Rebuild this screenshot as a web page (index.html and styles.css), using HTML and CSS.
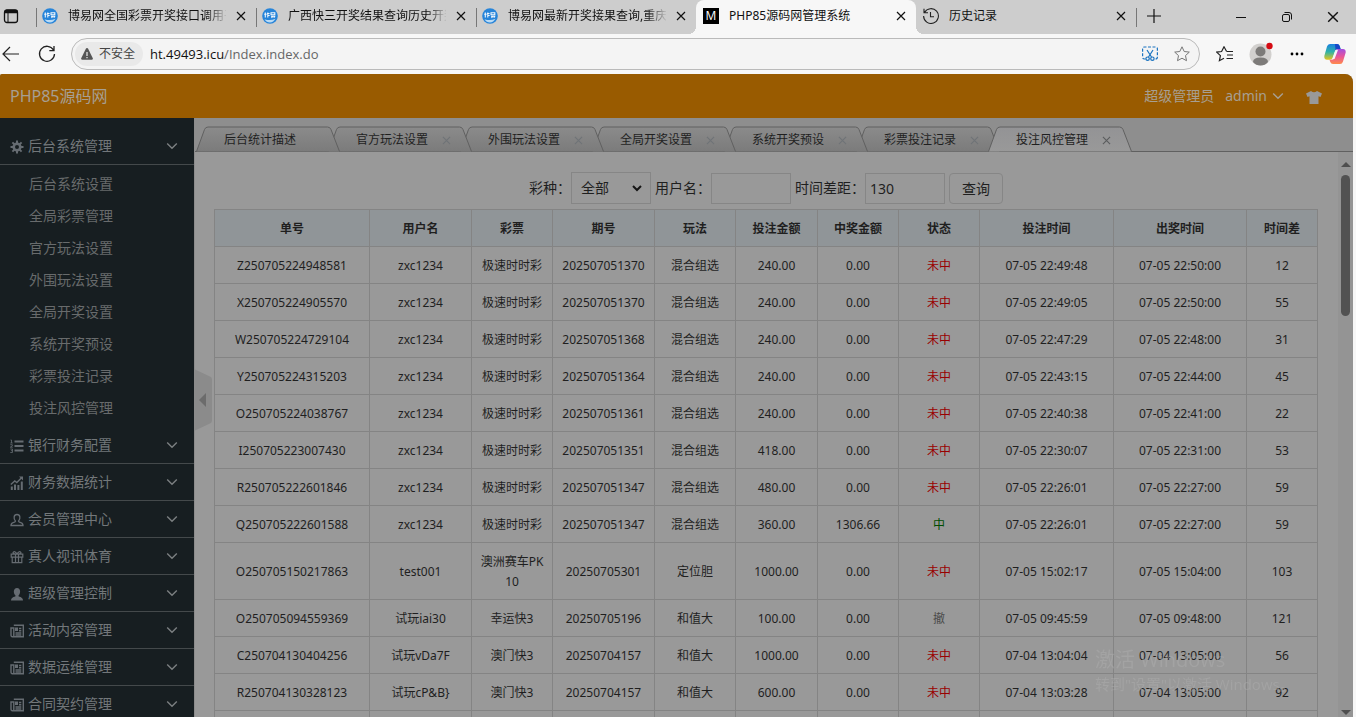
FILE: index.html
```html
<!DOCTYPE html>
<html lang="zh-CN">
<head>
<meta charset="utf-8">
<title>PHP85源码网管理系统</title>
<link rel="stylesheet" href="styles.css">
</head>
<body>
<svg class="defs" aria-hidden="true">
  <defs>
    <linearGradient id="g-tab" x1="0" y1="0" x2="0" y2="1"><stop offset="0" stop-color="#8b8b8b"/><stop offset="1" stop-color="#7b7b7b"/></linearGradient>
    <linearGradient id="g-active" x1="0" y1="0" x2="0" y2="1"><stop offset="0" stop-color="#939395"/><stop offset="1" stop-color="#999"/></linearGradient>
    <linearGradient id="g-cop1" x1="0" y1="0" x2="0" y2="1"><stop offset="0" stop-color="#1a7fe0"/><stop offset=".5" stop-color="#2fb3a8"/><stop offset="1" stop-color="#e8c61c"/></linearGradient>
    <linearGradient id="g-cop2" x1="0" y1="0" x2="0" y2="1"><stop offset="0" stop-color="#a14fe0"/><stop offset=".5" stop-color="#e8559a"/><stop offset="1" stop-color="#ff8a4a"/></linearGradient>
  </defs>
  <symbol id="i-x" viewBox="0 0 10 10"><path d="M1 1l8 8M9 1L1 9" fill="none" stroke="currentColor" stroke-width="1.2"/></symbol>
  <symbol id="i-down" viewBox="0 0 12 8"><path d="M1.2 1.5L6 6.3l4.800-4.800" fill="none" stroke="currentColor" stroke-width="1.400"/></symbol>
  <symbol id="i-site" viewBox="0 0 16 16"><circle cx="8" cy="8" r="7.800" fill="#2684d9"/><path d="M2.500 11.200q5.500 2 11-.4-2 3.700-5.500 3.700t-5.500-3.300z" fill="#b9dbf6"/><path d="M3.300 4.500v5M2.200 6.200h2.400M5.800 4.500v5M5 5.500h2.500M5.300 7.500h2.400M9 4.800h3.800v1.900H9zM9 8.200h4.300M9.500 9.800l1.200-1.500M11.800 9.800l1-1.700" fill="none" stroke="#f0f7fe" stroke-width="1.100"/></symbol>
  <symbol id="i-gear" viewBox="0 0 14 14"><circle cx="7" cy="7" r="3.300" fill="none" stroke="currentColor" stroke-width="2.600"/><path d="M7 .5v3M7 10.500v3M.5 7h3M10.500 7h3M2.400 2.400l2 2M9.600 9.600l2 2M11.600 2.400l-2 2M4.400 9.600l-2 2" stroke="currentColor" stroke-width="2"/></symbol>
  <symbol id="i-list" viewBox="0 0 14 14"><path d="M4.500 2.500h9M4.500 7h9M4.500 11.500h9" stroke="currentColor" stroke-width="1.800"/><path d="M.5 1h1v3M.3 4h2.400M.3 5.700h2v1.200l-2 1.300h2.500M.3 10h2.200v3.500H.3M1 11.700h1.500" fill="none" stroke="currentColor" stroke-width=".8"/></symbol>
  <symbol id="i-chart" viewBox="0 0 14 14"><path d="M.8 8.500l4-3.500 2 1.500 5-5" fill="none" stroke="currentColor" stroke-width="1.400"/><path d="M9 .5h4v4z" fill="currentColor"/><path d="M1.800 10.500V14M5 8.500V14M8.400 9V14M11.800 5.500V14" stroke="currentColor" stroke-width="2"/></symbol>
  <symbol id="i-member" viewBox="0 0 14 14"><path d="M5.500 8.200C3.200 5.500 3.700 1.500 7 1.500s3.800 4 1.500 6.700q.2 1 2.300 1.500 2.200.5 2.200 2.800H1q0-2.300 2.200-2.800 2.100-.5 2.300-1.500z" fill="none" stroke="currentColor" stroke-width="1.300"/></symbol>
  <symbol id="i-gift" viewBox="0 0 14 14"><path d="M1.200 4.200h11.600v3H1.200zM2.200 7.200v5.500h9.600V7.200M5.500 4.200v8.500M8.500 4.200v8.500M7 4Q5 .8 3.500 2T5 4M7 4q2-3.200 3.500-2T9 4" fill="none" stroke="currentColor" stroke-width="1.200"/></symbol>
  <symbol id="i-admin" viewBox="0 0 14 14"><path d="M5.500 8.500C2.800 6 3.500 1 7 1s4.200 5 1.500 7.500l.2 1Q13 10.300 13 13.500H1q0-3.200 4.300-4z" fill="currentColor"/></symbol>
  <symbol id="i-news" viewBox="0 0 14 14"><path d="M3.800 1.200h9.500v11.500H2.300Q1 12.700 1 11.300V4h2.800v8M5.500 9h5.800M5.500 11h5.800M9 4.500h2.300M9 6.700h2.300" fill="none" stroke="currentColor" stroke-width="1.400"/><path d="M5 3.500h3V7H5z" fill="currentColor"/></symbol>
  <symbol id="i-shape" viewBox="0 0 144 26"><path d="M.5 25.500L8.500 3.500Q9.500 1 12 1H131.500Q134 1 135 3.500L143.500 25.500" stroke="#606060"/></symbol>
</svg>

<header class="browser">
  <div class="tabbar">
    <button class="tab-menu" aria-label="标签页操作"><svg width="16" height="16" viewBox="0 0 16 16"><rect x="1.500" y="2" width="13" height="12.500" rx="2.500" fill="none" stroke="#111" stroke-width="1.300"/><path d="M1.500 2.800q0-1 2-1h9q2 0 2 1v2.500h-13z" fill="#111"/><path d="M5 5v9" stroke="#111"/></svg></button>
    <div class="btab"><svg class="fav"><use href="#i-site"/></svg><span class="btitle fade">博易网全国彩票开奖接口调用平</span><button class="bclose" aria-label="关闭"><svg><use href="#i-x"/></svg></button></div>
    <div class="btab"><svg class="fav"><use href="#i-site"/></svg><span class="btitle fade">广西快三开奖结果查询历史开奖</span><button class="bclose" aria-label="关闭"><svg><use href="#i-x"/></svg></button></div>
    <div class="btab"><svg class="fav"><use href="#i-site"/></svg><span class="btitle fade">博易网最新开奖接果查询,重庆</span><button class="bclose" aria-label="关闭"><svg><use href="#i-x"/></svg></button></div>
    <div class="btab current"><span class="fav fav-m">M</span><span class="btitle">PHP85源码网管理系统</span><button class="bclose" aria-label="关闭"><svg><use href="#i-x"/></svg></button></div>
    <div class="btab plain"><svg class="fav" viewBox="0 0 16 16" fill="none" stroke="#222" stroke-width="1.100"><path d="M1.500 4.500A7.400 7.400 0 1 1 .6 8M1 .8v4h4M7.500 4v4.800H11"/></svg><span class="btitle">历史记录</span><button class="bclose" aria-label="关闭"><svg><use href="#i-x"/></svg></button></div>
    <button class="newtab" aria-label="新建标签页"><svg width="14" height="14" viewBox="0 0 14 14"><path d="M7 0v14M0 7h14" stroke="#111" stroke-width="1.200"/></svg></button>
    <div class="wincontrols">
      <button aria-label="最小化"><svg width="10" height="10" viewBox="0 0 10 10"><path d="M0 5.500h10" stroke="#111"/></svg></button>
      <button aria-label="还原"><svg width="10" height="10" viewBox="0 0 10 10" fill="none" stroke="#111"><rect x=".5" y="2.500" width="7" height="7" rx="1.500"/><path d="M2.500.5H7q2.500 0 2.500 2.500v4.500"/></svg></button>
      <button aria-label="关闭窗口"><svg width="12" height="12"><use href="#i-x"/></svg></button>
    </div>
  </div>
  <div class="toolbar">
    <button aria-label="后退"><svg width="17" height="16" viewBox="0 0 17 16"><path d="M17 8H2M8 1L1 8l7 7" fill="none" stroke="#222" stroke-width="1.200"/></svg></button>
    <button class="reload" aria-label="刷新"><svg width="18" height="18" viewBox="0 0 18 18"><path d="M15.500 5A7.500 7.500 0 1 0 16.500 9M16 1v4.700h-4.700" fill="none" stroke="#222" stroke-width="1.300"/></svg></button>
    <div class="address">
      <button class="insecure"><svg width="12" height="12" viewBox="0 0 12 12"><path d="M6 0q.7 0 1 .6l4.800 9.700q.4 1.200-.8 1.400H1Q-.2 11.500.2 10.300L5 .6Q5.300 0 6 0z" fill="#555"/><path d="M6 4v4M6 9v1.300" stroke="#ebebeb" stroke-width="1.200"/></svg>不安全</button>
      <a class="url" href="#">ht.49493.icu<span>/Index.index.do</span></a>
      <button aria-label="截图"><svg width="16" height="16" viewBox="0 0 16 16" fill="none" stroke="#1a73c0" stroke-width="1.200"><path d="M3.500 13H2.500Q.6 13 .6 11V3Q.6 1 2.500 1h11q1.900 0 1.900 2v8q0 2-1.900 2h-1" stroke-dasharray="3 1.500"/><path d="M5 4l4.500 7M11 4l-4.500 7"/><circle cx="5.600" cy="12.700" r="1.700"/><circle cx="10.400" cy="12.700" r="1.700"/></svg></button>
      <button class="fav-star" aria-label="收藏"><svg width="16" height="16" viewBox="0 0 16 16"><path d="M8 .8l2.200 4.700 5.100.6-3.800 3.500 1 5.100L8 12.200l-4.500 2.500 1-5.100L.7 6.100l5.100-.6z" fill="none" stroke="#777"/></svg></button>
    </div>
    <button class="collections" aria-label="收藏夹"><svg width="18" height="16" viewBox="0 0 18 16" fill="none" stroke="#222" stroke-width="1.200"><path d="M10.500 5.200L8 .8 5.600 5.500l-4.900.6 3.700 3.500-1 5.100L8 12.300M10.500 5.500H17M11 9h6M10.500 12.500H17"/></svg></button>
    <button class="profile" aria-label="个人资料"><svg width="24" height="24" viewBox="0 0 24 24"><circle cx="11.500" cy="12.500" r="11" fill="#d2d0ce"/><circle cx="11.500" cy="9.500" r="5" fill="#7d7b79"/><path d="M4 20q0-4.500 7.500-4.500T19 20q-3 3.500-7.500 3.500T4 20z" fill="#7d7b79"/><circle cx="20.500" cy="4" r="3.200" fill="#d50b13"/></svg></button>
    <button class="more" aria-label="更多"><svg width="14" height="4" viewBox="0 0 14 4"><circle cx="2" cy="2" r="1.400"/><circle cx="7" cy="2" r="1.400"/><circle cx="12" cy="2" r="1.400"/></svg></button>
    <button class="copilot" aria-label="Copilot"><svg width="22" height="20" viewBox="0 0 22 20"><path d="M6 0h7q2 0 2.700 2l.9 3h-3q-2 0-2.600 2L8.500 14q-.6 1.800-2.500 1.800H3Q0 15.800.3 12L3 2.500Q3.700 0 6 0z" fill="url(#g-cop1)"/><path d="M13.500 5H19q3 0 2.700 3.500L19 17.500q-.7 2.500-3 2.500H9q-2 0-2.700-2L5.500 15.800h2q1.700 0 2.300-2l1.900-7Q12.200 5 13.500 5z" fill="url(#g-cop2)"/><path d="M11 0h2q2 0 2.700 2l.9 3h-3q-1.500 0-2.100 1.200z" fill="#1747c8"/><path d="M11.500 6.200L14 5.800l-3.300 9-2.500 1z" fill="#f7f7f7"/></svg></button>
  </div>
</header>

<div class="app">
  <header class="topbar">
    <a class="brand" href="#">PHP85源码网</a>
    <div class="account">
      <span>超级管理员</span>
      <button class="user">admin<svg width="12" height="8"><use href="#i-down"/></svg></button>
      <button class="skin" aria-label="换肤"><svg width="16" height="13" viewBox="0 0 16 13"><path d="M5 0q3 2.500 6 0l5 2.500L14.500 6l-2-.7V13h-9V5.300l-2 .7L0 2.500z" fill="currentColor"/></svg></button>
    </div>
  </header>
  <div class="workspace">
    <nav class="sidebar">
      <button class="group"><svg><use href="#i-gear"/></svg><span>后台系统管理</span><svg class="chev"><use href="#i-down"/></svg></button>
      <ul class="submenu">
        <li><a href="#">后台系统设置</a></li>
        <li><a href="#">全局彩票管理</a></li>
        <li><a href="#">官方玩法设置</a></li>
        <li><a href="#">外围玩法设置</a></li>
        <li><a href="#">全局开奖设置</a></li>
        <li><a href="#">系统开奖预设</a></li>
        <li><a href="#">彩票投注记录</a></li>
        <li><a href="#">投注风控管理</a></li>
      </ul>
      <button class="group"><svg><use href="#i-list"/></svg><span>银行财务配置</span><svg class="chev"><use href="#i-down"/></svg></button>
      <button class="group"><svg><use href="#i-chart"/></svg><span>财务数据统计</span><svg class="chev"><use href="#i-down"/></svg></button>
      <button class="group"><svg><use href="#i-member"/></svg><span>会员管理中心</span><svg class="chev"><use href="#i-down"/></svg></button>
      <button class="group"><svg><use href="#i-gift"/></svg><span>真人视讯体育</span><svg class="chev"><use href="#i-down"/></svg></button>
      <button class="group"><svg><use href="#i-admin"/></svg><span>超级管理控制</span><svg class="chev"><use href="#i-down"/></svg></button>
      <button class="group"><svg><use href="#i-news"/></svg><span>活动内容管理</span><svg class="chev"><use href="#i-down"/></svg></button>
      <button class="group"><svg><use href="#i-news"/></svg><span>数据运维管理</span><svg class="chev"><use href="#i-down"/></svg></button>
      <button class="group"><svg><use href="#i-news"/></svg><span>合同契约管理</span><svg class="chev"><use href="#i-down"/></svg></button>
    </nav>
    <button class="handle" aria-label="收起菜单"><svg width="18" height="62" viewBox="0 0 18 62"><path d="M0 0l17 8q1 1 1 3v40q0 2-1 3L0 62z" fill="#8b8b8b"/><path d="M12 24v14l-7-7z" fill="#6c6c6c"/></svg></button>
    <main class="content">
      <div class="pagetabs">
        <div class="ptab"><svg class="shape"><use href="#i-shape"/></svg><a href="#">后台统计描述</a></div>
        <div class="ptab"><svg class="shape"><use href="#i-shape"/></svg><a href="#">官方玩法设置</a><button aria-label="关闭"><svg><use href="#i-x"/></svg></button></div>
        <div class="ptab"><svg class="shape"><use href="#i-shape"/></svg><a href="#">外围玩法设置</a><button aria-label="关闭"><svg><use href="#i-x"/></svg></button></div>
        <div class="ptab"><svg class="shape"><use href="#i-shape"/></svg><a href="#">全局开奖设置</a><button aria-label="关闭"><svg><use href="#i-x"/></svg></button></div>
        <div class="ptab"><svg class="shape"><use href="#i-shape"/></svg><a href="#">系统开奖预设</a><button aria-label="关闭"><svg><use href="#i-x"/></svg></button></div>
        <div class="ptab"><svg class="shape"><use href="#i-shape"/></svg><a href="#">彩票投注记录</a><button aria-label="关闭"><svg><use href="#i-x"/></svg></button></div>
        <div class="ptab active"><svg class="shape"><use href="#i-shape"/></svg><a href="#">投注风控管理</a><button aria-label="关闭"><svg><use href="#i-x"/></svg></button></div>
      </div>
      <div class="frame">
        <div class="page">
          <form class="filters">
            <label for="kind">彩种：</label>
            <span class="pick"><select id="kind"><option>全部</option></select><svg width="10" height="7" viewBox="0 0 10 7"><path d="M1 1l4 4 4-4" fill="none" stroke="#151515" stroke-width="2"/></svg></span>
            <label for="name">用户名：</label>
            <input id="name" type="text">
            <label for="gap">时间差距：</label>
            <input id="gap" type="text" value="130">
            <button type="button">查询</button>
          </form>
          <table>
            <colgroup><col class="c-id"><col class="c-mid"><col class="c-s"><col class="c-mid"><col class="c-s"><col class="c-bet"><col class="c-s"><col class="c-s"><col class="c-time"><col class="c-out"><col class="c-diff"></colgroup>
            <thead><tr><th>单号</th><th>用户名</th><th>彩票</th><th>期号</th><th>玩法</th><th>投注金额</th><th>中奖金额</th><th>状态</th><th>投注时间</th><th>出奖时间</th><th>时间差</th></tr></thead>
            <tbody>
              <tr><td>Z250705224948581</td><td>zxc1234</td><td>极速时时彩</td><td>202507051370</td><td>混合组选</td><td>240.00</td><td>0.00</td><td class="lose">未中</td><td>07-05 22:49:48</td><td>07-05 22:50:00</td><td>12</td></tr>
              <tr><td>X250705224905570</td><td>zxc1234</td><td>极速时时彩</td><td>202507051370</td><td>混合组选</td><td>240.00</td><td>0.00</td><td class="lose">未中</td><td>07-05 22:49:05</td><td>07-05 22:50:00</td><td>55</td></tr>
              <tr><td>W250705224729104</td><td>zxc1234</td><td>极速时时彩</td><td>202507051368</td><td>混合组选</td><td>240.00</td><td>0.00</td><td class="lose">未中</td><td>07-05 22:47:29</td><td>07-05 22:48:00</td><td>31</td></tr>
              <tr><td>Y250705224315203</td><td>zxc1234</td><td>极速时时彩</td><td>202507051364</td><td>混合组选</td><td>240.00</td><td>0.00</td><td class="lose">未中</td><td>07-05 22:43:15</td><td>07-05 22:44:00</td><td>45</td></tr>
              <tr><td>O250705224038767</td><td>zxc1234</td><td>极速时时彩</td><td>202507051361</td><td>混合组选</td><td>240.00</td><td>0.00</td><td class="lose">未中</td><td>07-05 22:40:38</td><td>07-05 22:41:00</td><td>22</td></tr>
              <tr><td>I250705223007430</td><td>zxc1234</td><td>极速时时彩</td><td>202507051351</td><td>混合组选</td><td>418.00</td><td>0.00</td><td class="lose">未中</td><td>07-05 22:30:07</td><td>07-05 22:31:00</td><td>53</td></tr>
              <tr><td>R250705222601846</td><td>zxc1234</td><td>极速时时彩</td><td>202507051347</td><td>混合组选</td><td>480.00</td><td>0.00</td><td class="lose">未中</td><td>07-05 22:26:01</td><td>07-05 22:27:00</td><td>59</td></tr>
              <tr><td>Q250705222601588</td><td>zxc1234</td><td>极速时时彩</td><td>202507051347</td><td>混合组选</td><td>360.00</td><td>1306.66</td><td class="win">中</td><td>07-05 22:26:01</td><td>07-05 22:27:00</td><td>59</td></tr>
              <tr><td>O250705150217863</td><td>test001</td><td>澳洲赛车PK10</td><td>20250705301</td><td>定位胆</td><td>1000.00</td><td>0.00</td><td class="lose">未中</td><td>07-05 15:02:17</td><td>07-05 15:04:00</td><td>103</td></tr>
              <tr><td>O250705094559369</td><td>试玩iai30</td><td>幸运快3</td><td>20250705196</td><td>和值大</td><td>100.00</td><td>0.00</td><td class="void">撤</td><td>07-05 09:45:59</td><td>07-05 09:48:00</td><td>121</td></tr>
              <tr><td>C250704130404256</td><td>试玩vDa7F</td><td>澳门快3</td><td>20250704157</td><td>和值大</td><td>1000.00</td><td>0.00</td><td class="lose">未中</td><td>07-04 13:04:04</td><td>07-04 13:05:00</td><td>56</td></tr>
              <tr><td>R250704130328123</td><td>试玩cP&amp;B}</td><td>澳门快3</td><td>20250704157</td><td>和值大</td><td>600.00</td><td>0.00</td><td class="lose">未中</td><td>07-04 13:03:28</td><td>07-04 13:05:00</td><td>92</td></tr>
              <tr class="cut"><td></td><td></td><td></td><td></td><td></td><td></td><td></td><td></td><td></td><td></td><td></td></tr>
            </tbody>
          </table>
        </div>
        <div class="scrollbar"><span class="up"></span><span class="thumb"></span><span class="dn"></span></div>
      </div>
    </main>
  </div>
</div>
<div class="activate"><p class="big">激活 Windows</p><p>转到"设置"以激活 Windows。</p></div>
</body>
</html>
```
FILE: styles.css
```css
* { box-sizing: border-box; }
html, body { height: 100%; }
body {
  margin: 0;
  display: flex;
  flex-direction: column;
  overflow: hidden;
  background: #f7f7f7;
  font: 12px/20px "Noto Sans", "Noto Sans CJK SC", sans-serif;
  color: #1f1f1f;
}
button, input, select { font: inherit; color: inherit; }
button { padding: 0; border: 0; background: none; display: flex; align-items: center; justify-content: center; }
a { color: inherit; text-decoration: none; }
ul, p { margin: 0; padding: 0; list-style: none; }
svg { display: block; flex: none; }
.defs { position: absolute; width: 0; height: 0; }

/* Browser window */
.browser { flex: none; color: #111; }
.tabbar { height: 34px; display: flex; background: #cdcdcd; }
.tab-menu { width: 36px; padding: 0 14px 2px 0; }
.btab {
  flex: 0 1 220px;
  min-width: 0;
  padding: 0 10px 2px 6px;
  display: flex;
  align-items: center;
  gap: 10px;
  background: linear-gradient(#777, #777) 0 8px / 1px 19px no-repeat;
}
.fav { width: 16px; height: 16px; flex: none; }
.fav-m { background: #000; color: #fff; font: 12px/16px "Open Sans", sans-serif; text-align: center; }
.btitle { flex: 1; min-width: 0; overflow: hidden; white-space: nowrap; }
.fade { mask-image: linear-gradient(to right, #000 88%, transparent 101%); }
.bclose { width: 10px; height: 10px; }
.bclose svg { width: 10px; height: 10px; }
.btab.current { position: relative; padding-left: 7px; background: #f7f7f7; border-radius: 8px 8px 0 0; }
.current::before, .current::after { content: ""; position: absolute; bottom: 0; width: 8px; height: 8px; }
.current::before { right: 100%; background: radial-gradient(circle at 0 0, transparent 8px, #f7f7f7 8px); }
.current::after { left: 100%; background: radial-gradient(circle at 100% 0, transparent 8px, #f7f7f7 8px); }
.btab.plain { padding-left: 7px; background: none; }
.newtab { width: 36px; padding-bottom: 2px; background: linear-gradient(#777, #777) 0 8px / 1px 19px no-repeat; }
.wincontrols { margin-left: auto; display: flex; }
.wincontrols button { width: 46px; }

.toolbar { height: 40px; padding: 0 10px 0 2px; display: flex; align-items: center; background: #f7f7f7; }
.reload { margin: 0 15px 0 19px; }
.address {
  flex: 1;
  height: 32px;
  padding: 0 9px 0 3px;
  display: flex;
  align-items: center;
  border: 1px solid #bababa;
  border-radius: 16px;
  background: #f4f4f4;
}
.insecure { height: 24px; padding: 0 8px 0 6px; gap: 6px; border-radius: 12px; background: #e9e9e9; color: #444; }
.url { flex: 1; margin-left: 7px; font: 13px/20px "Open Sans", sans-serif; }
.url span { color: #666; }
.fav-star { margin-left: 16px; }
.collections { margin-left: 16px; }
.profile { margin-left: 15px; }
.more { margin-left: 17px; }
.copilot { margin-left: 20px; }

/* Admin shell */
.app { flex: 1; min-height: 0; margin-right: 3px; display: flex; flex-direction: column; border-radius: 2px 8px 0 0; overflow: hidden; background: #999; }
.topbar { flex: none; height: 44px; padding: 0 31px 0 10px; display: flex; align-items: center; justify-content: space-between; background: #995b00; color: #a79f92; }
.brand { font-size: 16px; }
.account { display: flex; align-items: center; gap: 11px; font-size: 14px; }
.user { gap: 5px; }
.skin { margin-left: 11px; padding-top: 3px; color: #999; }

.workspace { flex: 1; min-height: 0; display: flex; position: relative; }
.sidebar { flex: none; width: 194px; padding-top: 10px; overflow: hidden; background: #171e21; color: #72777a; font-size: 14px; }
.group { width: 100%; height: 37px; padding: 0 16px 0 10px; gap: 4px; border-bottom: 1px solid #44494b; text-align: left; }
.group span { flex: 1; }
.group svg { width: 14px; height: 14px; margin-top: 2px; color: #666c72; }
.group .chev { width: 12px; height: 8px; margin-top: 0; color: #7b7f81; }
.submenu { padding: 3px 0; color: #686b6c; }
.submenu a { display: block; padding-left: 29px; line-height: 32px; }
.handle { position: absolute; left: 194px; top: 251px; }

.content { flex: 1; min-width: 0; display: flex; flex-direction: column; border-left: 1px solid #8c8c8c; }
.pagetabs { flex: none; height: 34px; padding: 8px 0 0 1px; display: flex; background: linear-gradient(#606060, #606060) 0 100% / 100% 1px no-repeat #8e8e8e; isolation: isolate; }
.ptab { position: relative; flex: none; width: 132px; padding: 2px 0 0 28px; display: flex; align-items: center; gap: 14px; }
.ptab:nth-child(1) { z-index: 6; }
.ptab:nth-child(2) { z-index: 5; }
.ptab:nth-child(3) { z-index: 4; }
.ptab:nth-child(4) { z-index: 3; }
.ptab:nth-child(5) { z-index: 2; }
.ptab:nth-child(6) { z-index: 1; }
.ptab.active { z-index: 7; }
.shape { position: absolute; left: 0; top: 0; width: 144px; height: 26px; fill: url(#g-tab); }
.active .shape { fill: url(#g-active); }
.ptab a, .ptab button { position: relative; }
.ptab button { color: #6f7377; }
.ptab button svg { width: 9px; height: 9px; }
.ptab.active button { color: #5a5c5e; }

.frame { flex: 1; min-height: 0; display: flex; }
.page { flex: 1; min-width: 0; padding: 20px 20px 0 19px; overflow: hidden; }
.filters { display: flex; justify-content: center; align-items: flex-end; margin-bottom: 5px; font-size: 14px; }
.filters label { line-height: 31px; padding-bottom: 1px; }
.filters input, .pick { margin-right: 4px; }
.filters input, .filters select { width: 80px; height: 31px; padding: 0 4px; border: 1px solid #868686; border-radius: 0; background: #999; }
.pick { display: flex; align-items: center; }
.filters select { height: 32px; padding: 0 9px; appearance: none; }
.pick svg { margin-left: -19px; margin-right: 9px; pointer-events: none; }
.filters button { width: 54px; height: 31px; border: 1px solid #868686; border-radius: 4px; }

table { width: 100%; table-layout: fixed; border-collapse: collapse; }
.c-id { width: 155px; }
.c-mid { width: 102px; }
.c-s { width: 81px; }
.c-bet { width: 82px; }
.c-time { width: 134px; }
.c-out { width: 133px; }
.c-diff { width: 71px; }
th, td { padding: 9px 8px 7px; border: 1px solid #848484; text-align: center; word-break: break-all; }
th { background: #909598; font-weight: 700; }
.cut td { height: 37px; }
.lose { color: #990000; }
.win { color: #004d00; }
.void { color: #4a4a4a; }

.scrollbar { flex: none; width: 15px; padding: 10px 0 2px; display: flex; flex-direction: column; align-items: center; background: #949494; }
.up { border: 5px solid transparent; border-top: 0; border-bottom: 5px solid #4e4e4e; }
.thumb { width: 9px; height: 141px; margin: 8px 0 auto; border-radius: 5px; background: #525252; }
.dn { border: 5px solid transparent; border-bottom: 0; border-top: 5px solid #4e4e4e; }

.activate { position: fixed; left: 1095px; bottom: 22px; color: rgba(175, 175, 175, .45); font: 15px/22px "Open Sans", "Noto Sans CJK SC", sans-serif; white-space: nowrap; pointer-events: none; }
.activate .big { font-size: 20px; line-height: 26px; }
```
